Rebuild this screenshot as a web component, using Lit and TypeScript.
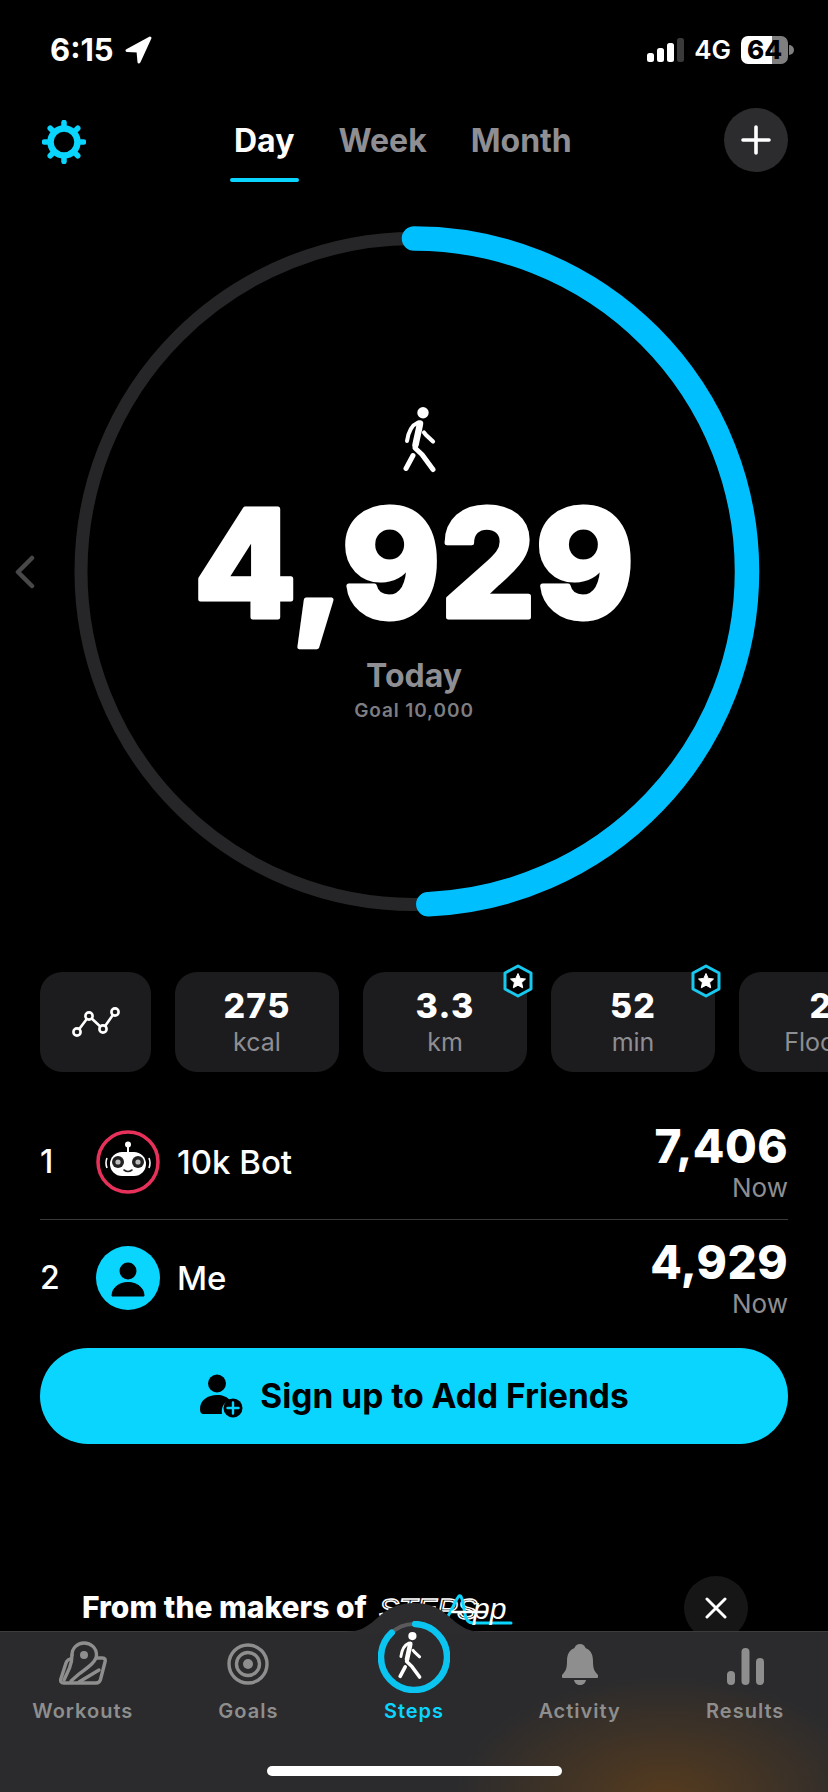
import { LitElement, html, css, svg } from "lit";
import { customElement } from "lit/decorators.js";

const GRAY = css`#8e8e93`;

const walker = (color: string) => svg`
  <g fill="none" stroke=${color} stroke-linecap="round" stroke-linejoin="round">
    <circle cx="20" cy="5.7" r="5.7" fill=${color} stroke="none"/>
    <path stroke-width="6.5" d="M17 16.5C16 23 14 30 12.5 38"/>
    <path stroke-width="4" d="M15 15.5C9 18 5.5 24 4 34"/>
    <path stroke-width="4.2" d="M21 25.5L23 28L30 34.5"/>
    <path stroke-width="5" d="M12 41L19 47.5L30 62.5"/>
    <path stroke-width="5" d="M10 48.5L3 61.5"/>
  </g>`;

@customElement("app-root")
export class AppRoot extends LitElement {
  static styles = css`
    :host {
      display: block;
      width: 828px;
      height: 1792px;
      background: #000;
      color: #fff;
      font-family: Inter, "Liberation Sans", sans-serif;
      overflow: hidden;
    }
    .page { display: flex; flex-direction: column; height: 1792px; position: relative; overflow: hidden; }
    svg { display: block; }

    .status { height: 100px; flex: none; display: flex; justify-content: space-between; align-items: flex-start; padding: 33px 34px 0 50px; box-sizing: border-box; }
    .status-left { display: flex; align-items: center; gap: 10px; }
    .time { font-size: 31px; font-weight: 700; line-height: 34px; }
    .status-right { display: flex; align-items: center; padding-top: 2px; }
    .net { font-size: 26px; font-weight: 600; line-height: 30px; margin: 0 10px 0 9px; }
    .battery { width: 47px; height: 28px; border-radius: 7px; background: linear-gradient(90deg, #fff 31px, #7f7f7f 31px); color: #000; font-size: 26px; font-weight: 800; line-height: 28px; text-align: center; }
    .battery-cap { width: 5px; height: 10px; margin-left: 1px; border-radius: 0 5px 5px 0; background: #7f7f7f; }

    .header { height: 108px; flex: none; display: grid; grid-template-columns: 190px 1fr 104px; align-items: start; padding-left: 42px; box-sizing: border-box; }
    .gear { margin-top: 20px; }
    .tabs { display: flex; gap: 44px; padding-left: 2px; padding-top: 20px; }
    .tab { font-size: 32px; font-weight: 700; line-height: 42px; color: ${GRAY}; position: relative; }
    .tab.on { color: #fff; }
    .tab.on::after { content: ""; position: absolute; left: -4px; right: -5px; top: 58px; height: 4px; border-radius: 2px; background: #0ad5ff; }
    .plus { width: 64px; height: 64px; border-radius: 50%; background: #2c2c2e; display: flex; align-items: center; justify-content: center; margin-top: 8px; }

    .ring { position: relative; height: 728px; flex: none; }
    .chev { position: absolute; left: 14px; top: 347px; }
    .center { position: absolute; inset: 0; display: flex; flex-direction: column; align-items: center; }
    .center .walk { margin-top: 199px; margin-left: 12px; }
    .big { margin-top: 18px; }
    .big text { font-family: Inter, sans-serif; font-weight: 800; font-size: 149px; fill: #fff; stroke: #fff; stroke-width: 5px; stroke-linejoin: round; }
    .today { font-size: 32px; font-weight: 700; line-height: 40px; color: ${GRAY}; margin-top: 4px; }
    .goal { font-size: 19px; font-weight: 600; line-height: 24px; letter-spacing: 0.9px; color: #7d7d82; margin-top: 3px; }

    .chips { flex: none; margin-top: 36px; height: 100px; display: flex; gap: 24px; padding-left: 40px; overflow: visible; }
    .chip { flex: none; width: 164px; height: 100px; border-radius: 22px; background: #1c1c1e; position: relative; display: flex; flex-direction: column; align-items: center; }
    .chip.icon { width: 111px; justify-content: center; }
    .chip .v { font-size: 34px; font-weight: 800; line-height: 40px; letter-spacing: 1.2px; margin-top: 14px; }
    .chip .u { font-size: 25px; line-height: 30px; color: ${GRAY}; margin-top: 1px; }
    .badge { position: absolute; right: -7px; top: -8px; }

    .rows { flex: none; margin-top: 32px; padding: 0 40px; }
    .row { height: 115px; display: flex; align-items: center; position: relative; }
    .row + .row { border-top: 1px solid #3a3a3c; height: 116px; }
    .rank { width: 56px; font-size: 32px; line-height: 40px; font-weight: 500; }
    .av { flex: none; margin-right: 17px; }
    .name { flex: 1; font-size: 33px; line-height: 40px; font-weight: 500; }
    .score { text-align: right; }
    .score .n { font-size: 46px; font-weight: 800; line-height: 50px; letter-spacing: 0.4px; }
    .score .t { font-size: 26px; line-height: 30px; color: ${GRAY}; margin-top: 2px; }

    .cta { flex: none; margin: 12px 40px 0; height: 96px; border-radius: 48px; background: #0ad5ff; color: #000; display: flex; align-items: center; justify-content: center; gap: 15px; font-size: 33.5px; font-weight: 700; }

    .promo { flex: 1; display: flex; align-items: flex-end; position: relative; padding-left: 82px; min-height: 0; }
    .promo-text { font-size: 30px; font-weight: 800; line-height: 36px; margin-bottom: 6px; white-space: nowrap; }
    .promo-logo { margin-left: 10px; margin-bottom: 5px; }
    .promo-logo text { font-family: "Liberation Sans", sans-serif; font-style: italic; }
    .close { position: absolute; left: 684px; bottom: -9px; width: 64px; height: 64px; border-radius: 50%; background: #161617; display: flex; align-items: center; justify-content: center; }

    .tabbar { flex: none; height: 161px; position: relative; box-sizing: border-box; border-top: 1px solid #3c3c3e;
      background: radial-gradient(ellipse 210px 120px at 665px 165px, rgba(120, 72, 18, 0.55), rgba(120, 72, 18, 0) 100%), #2b2b2d;
      display: grid; grid-template-columns: repeat(5, 1fr); }
    .bump { position: absolute; left: 344px; top: -30px; }
    .item { display: flex; flex-direction: column; align-items: center; position: relative; font-size: 20px; font-weight: 600; letter-spacing: 1px; color: #8e8e8e; }
    .item .ic { height: 53px; display: flex; align-items: flex-end; }
    .item .lbl { line-height: 24px; position: absolute; top: 67px; }
    .item.on { color: #0ad5ff; }
    .item.on .ic { height: 61px; position: relative; }
    .home { position: absolute; left: 267px; top: 134px; width: 295px; height: 10px; border-radius: 5px; background: #fff; }
  `;

  private chips = [
    { v: "275", u: "kcal", star: false },
    { v: "3.3", u: "km", star: true },
    { v: "52", u: "min", star: true },
    { v: "2", u: "Floors", star: false },
  ];

  private gear() {
    const teeth = [0, 45, 90, 135, 180, 225, 270, 315];
    return html`<svg class="gear" width="44" height="44" viewBox="0 0 44 44">
      <circle cx="22" cy="22" r="13.5" fill="none" stroke="#0ad5ff" stroke-width="6.5"/>
      ${teeth.map((a) => svg`<line x1="22" y1="5" x2="22" y2="2.5" stroke="#0ad5ff" stroke-width="5.5" stroke-linecap="round" transform="rotate(${a} 22 22)"/>`)}
    </svg>`;
  }

  private badge() {
    return html`<svg class="badge" width="32" height="34" viewBox="0 0 32 34">
      <path d="M16 2L29 9V25L16 32L3 25V9Z" fill="#000" stroke="#18c8ee" stroke-width="3" stroke-linejoin="round"/>
      <path d="M16 9.5L18.2 14.4L23.5 15L19.6 18.6L20.7 23.8L16 21.2L11.3 23.8L12.4 18.6L8.5 15L13.8 14.4Z" fill="#fff" stroke="#fff" stroke-linejoin="round"/>
    </svg>`;
  }

  private robot() {
    return html`<svg class="av" width="64" height="64" viewBox="0 0 64 64">
      <circle cx="32" cy="32" r="30" fill="#000" stroke="#e8315a" stroke-width="3.5"/>
      <circle cx="32" cy="14.5" r="3" fill="#fff"/>
      <rect x="31" y="16" width="2" height="6" fill="#fff"/>
      <rect x="14" y="22" width="36" height="24" rx="12" fill="#fff"/>
      <path d="M11 28Q9 33 11 38M53 28Q55 33 53 38" fill="none" stroke="#fff" stroke-width="1.6"/>
      <circle cx="22" cy="32" r="6" fill="#222"/><circle cx="42" cy="32" r="6" fill="#222"/>
      <circle cx="22" cy="32" r="2.6" fill="#bbb"/><circle cx="42" cy="32" r="2.6" fill="#bbb"/>
      <path d="M28 40Q32 43 36 40" fill="none" stroke="#222" stroke-width="1.6" stroke-linecap="round"/>
    </svg>`;
  }

  private me() {
    return html`<svg class="av" width="64" height="64" viewBox="0 0 64 64">
      <circle cx="32" cy="32" r="32" fill="#0ad5ff"/>
      <circle cx="32" cy="25" r="8.5" fill="#000"/>
      <path d="M16 50C16 41 24 36.5 32 36.5C40 36.5 48 41 48 50Z" fill="#000" stroke="#000" stroke-linejoin="round"/>
    </svg>`;
  }

  private addFriend() {
    return html`<svg width="46" height="44" viewBox="0 0 46 44">
      <circle cx="18" cy="9.5" r="9" fill="#000"/>
      <path d="M1 35C1 26 9 21 18 21C24 21 28 23 31 26C25 28 22 33 23 40H5C2 40 1 38 1 35Z" fill="#000"/>
      <circle cx="34" cy="34" r="9.5" fill="#000"/>
      <path d="M34 28.5V39.5M28.5 34H39.5" stroke="#0ad5ff" stroke-width="2.4" stroke-linecap="round"/>
    </svg>`;
  }

  private tabs() {
    const g = "#8e8e8e";
    return [
      { l: "Workouts", i: svg`<g fill="none" stroke=${g} stroke-width="3.4" stroke-linecap="round" stroke-linejoin="round">
        <path d="M38 17H43.5Q47 17 46 21L41.5 38.5Q40.5 42 37 42H5Q0.5 42 2 37.5L7 22Q8 19 11 18"/>
        <path d="M13 14C13 7 18.500 2 25 2C32 2 37.500 7 37.500 14C37.500 21 28 27 20 33L12 40"/>
        <path d="M13 14C13 18 13 21 10.500 27L5 39" />
        <path d="M40 29L20 41"/>
        <circle cx="25" cy="14" r="4" fill=${g} stroke="none"/>
      </g>`, w: 48, h: 44 },
      { l: "Goals", i: svg`<g fill="none" stroke=${g} stroke-width="3.4">
        <circle cx="21" cy="21" r="19"/><circle cx="21" cy="21" r="11.5"/><circle cx="21" cy="21" r="5" fill=${g} stroke="none"/>
      </g>`, w: 42, h: 42 },
      { l: "Steps", i: null, w: 72, h: 72 },
      { l: "Activity", i: svg`<g fill=${g}>
        <path d="M18 0C21 0 23 2 23.500 4C29 6 31 11 31 17C31 24 32 27 36 31C37 32 36.500 34 35 34H1C-0.500 34 -1 32 0 31C4 27 5 24 5 17C5 11 7 6 12.500 4C13 2 15 0 18 0Z"/>
        <path d="M12 36H24C23.500 39 21 41 18 41C15 41 12.500 39 12 36Z"/>
      </g>`, w: 36, h: 41 },
      { l: "Results", i: svg`<g fill=${g}>
        <rect x="0" y="23" width="8" height="14" rx="4"/><rect x="14.500" y="0" width="8" height="37" rx="4"/><rect x="29" y="10" width="8" height="27" rx="4"/>
      </g>`, w: 37, h: 37 },
    ];
  }

  private stepsRing() {
    const r = 33;
    const c = 2 * Math.PI * r;
    const frac = 0.875;
    return html`<svg width="72" height="72" viewBox="0 0 72 72">
      <circle cx="36" cy="36" r=${r} fill="none" stroke="#5a5a5c" stroke-width="4"/>
      <circle cx="36" cy="36" r=${r} fill="none" stroke="#0cc4f0" stroke-width="6.500" stroke-linecap="round"
        stroke-dasharray="${c * frac} ${c}" transform="rotate(-88 36 36)"/>
      <g transform="translate(20 11) scale(0.72)">${walker("#fff")}</g>
    </svg>`;
  }

  render() {
    const R = 333;
    const C = 2 * Math.PI * R;
    const progress = 4929 / 10000;
    return html`<div class="page">
      <div class="status">
        <div class="status-left">
          <span class="time">6:15</span>
          <svg width="28" height="28" viewBox="0 0 28 28"><path d="M26 2L3 14.500L14 15L15 26Z" fill="#fff" stroke="#fff" stroke-width="3" stroke-linejoin="round"/></svg>
        </div>
        <div class="status-right">
          <svg width="38" height="24" viewBox="0 0 38 24">
            <rect x="0" y="15" width="7" height="9" rx="2.500" fill="#fff"/><rect x="10" y="10" width="7" height="14" rx="2.500" fill="#fff"/>
            <rect x="20" y="5" width="7" height="19" rx="2.500" fill="#fff"/><rect x="30" y="0" width="7" height="24" rx="2.500" fill="#3a3a3a"/>
          </svg>
          <span class="net">4G</span>
          <span class="battery">64</span>
          <span class="battery-cap"></span>
        </div>
      </div>

      <div class="header">
        ${this.gear()}
        <div class="tabs">
          <span class="tab on">Day</span><span class="tab">Week</span><span class="tab">Month</span>
        </div>
        <div class="plus">
          <svg width="30" height="30" viewBox="0 0 30 30"><path d="M15 2V28M2 15H28" stroke="#fff" stroke-width="3.600" stroke-linecap="round"/></svg>
        </div>
      </div>

      <div class="ring">
        <svg width="828" height="728" viewBox="0 0 828 728">
          <circle cx="414" cy="363.500" r=${R} fill="none" stroke="#262628" stroke-width="13"/>
          <circle cx="414" cy="363.500" r=${R} fill="none" stroke="#00bfff" stroke-width="24.500" stroke-linecap="round"
            stroke-dasharray="${C * progress} ${C}" transform="rotate(-90 414 363.500)"/>
        </svg>
        <svg class="chev" width="22" height="34" viewBox="0 0 22 34"><path d="M18 3L4 17L18 31" fill="none" stroke="#48484a" stroke-width="4.500" stroke-linecap="round" stroke-linejoin="round"/></svg>
        <div class="center">
          <svg class="walk" width="34" height="67" viewBox="0 0 34 67">${walker("#fff")}</svg>
          <svg class="big" width="480" height="160" viewBox="0 0 480 160"><text x="240" y="125" text-anchor="middle">4,929</text></svg>
          <div class="today">Today</div>
          <div class="goal">Goal 10,000</div>
        </div>
      </div>

      <div class="chips">
        <div class="chip icon">
          <svg width="52" height="34" viewBox="0 0 52 34">
            <path d="M7 27L19 11L33 24L45 7" fill="none" stroke="#fff" stroke-width="2.600"/>
            ${[[7, 27], [19, 11], [33, 24], [45, 7]].map(([x, y]) => svg`<circle cx=${x} cy=${y} r="3.600" fill="#1c1c1e" stroke="#fff" stroke-width="2.600"/>`)}
          </svg>
        </div>
        ${this.chips.map((c) => html`<div class="chip">
          <div class="v">${c.v}</div><div class="u">${c.u}</div>
          ${c.star ? this.badge() : ""}
        </div>`)}
      </div>

      <div class="rows">
        <div class="row">
          <span class="rank">1</span>${this.robot()}<span class="name">10k Bot</span>
          <div class="score"><div class="n">7,406</div><div class="t">Now</div></div>
        </div>
        <div class="row">
          <span class="rank">2</span>${this.me()}<span class="name">Me</span>
          <div class="score"><div class="n">4,929</div><div class="t">Now</div></div>
        </div>
      </div>

      <div class="cta">${this.addFriend()}<span>Sign up to Add Friends</span></div>

      <div class="promo">
        <span class="promo-text">From the makers of</span>
        <svg class="promo-logo" width="136" height="32" viewBox="0 0 136 32">
          <text x="2" y="25" font-size="30" fill="#000" stroke="#fff" stroke-width="1.500">STEPS</text>
          <path d="M66 29C72 24 78 6 82 2C85 0 86 10 88 20C89 27 92 29 96 29H134" fill="none" stroke="#0ad5ff" stroke-width="3" stroke-linecap="round"/>
          <path d="M74 18H110" stroke="#fff" stroke-width="2.400"/>
          <text x="96" y="25" font-size="30" fill="#fff">pp</text>
        </svg>
        <div class="close">
          <svg width="22" height="22" viewBox="0 0 22 22"><path d="M2 2L20 20M20 2L2 20" stroke="#fff" stroke-width="3" stroke-linecap="round"/></svg>
        </div>
      </div>

      <div class="tabbar">
        <svg class="bump" width="140" height="31" viewBox="0 0 140 31">
          <path d="M0 30C14 30 22 26 32 17C44 6 54 1 70 1C86 1 96 6 108 17C118 26 126 30 140 30V31H0Z" fill="#2c2c2e"/>
        </svg>
        ${this.tabs().map((t) => html`<div class="item ${t.i ? "" : "on"}">
          <div class="ic">${t.i
            ? html`<svg width=${t.w} height=${t.h} viewBox="0 0 ${t.w} ${t.h}">${t.i}</svg>`
            : this.stepsRing()}</div>
          <span class="lbl">${t.l}</span>
        </div>`)}
        <div class="home"></div>
      </div>
    </div>`;
  }
}
